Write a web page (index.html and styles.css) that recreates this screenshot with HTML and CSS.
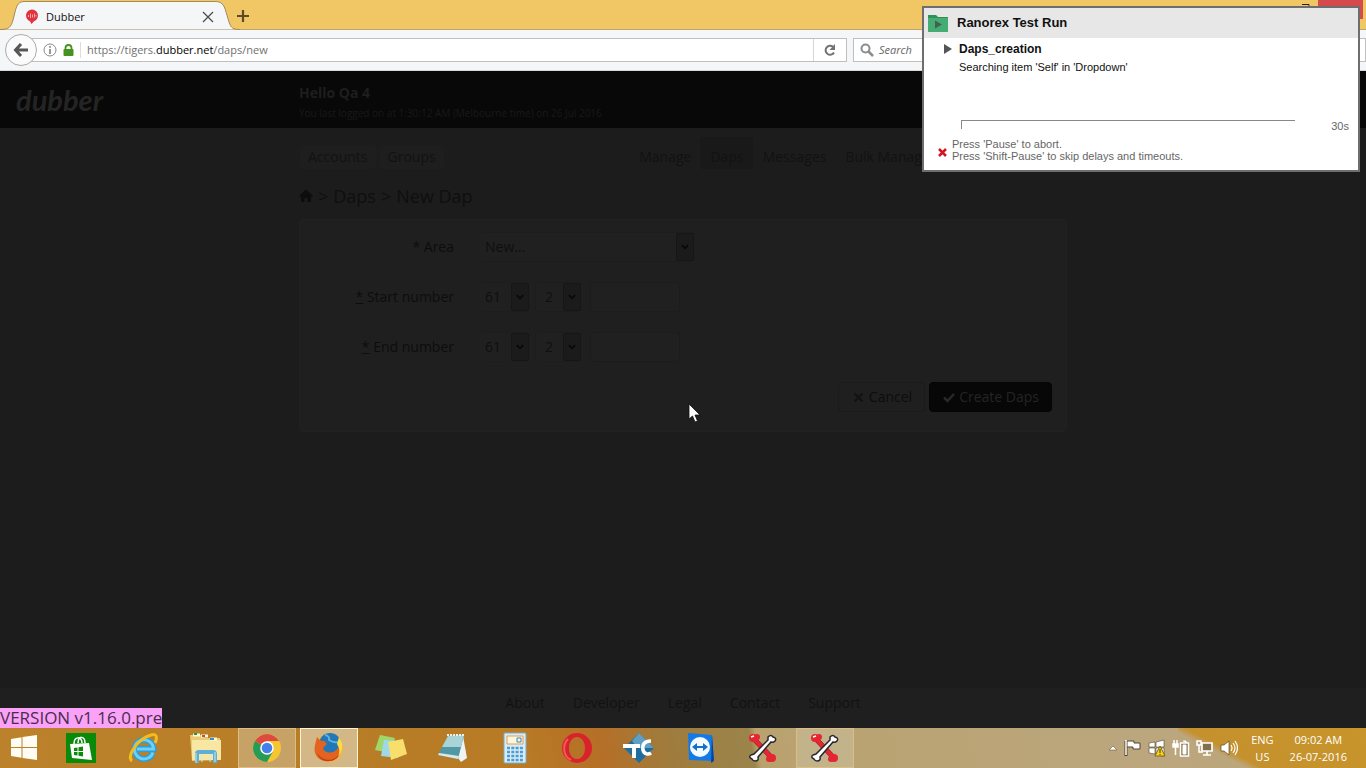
FILE: index.html
```html
<!DOCTYPE html>
<html lang="en">
<head>
<meta charset="utf-8">
<title>Dubber</title>
<link rel="stylesheet" href="styles.css">
</head>
<body>
<div class="tabstrip">
  <svg class="tab-shape" viewBox="0 0 240 30" width="240" height="30" aria-hidden="true"><path d="M0 29.500C9 29.500 11 27 13 20L15 12C17 4 19 1.500 25 1.500H215C221 1.500 224 4 226 12L229 22C231 28 233 29.500 240 29.500V30H0Z" fill="#f5f6f7" stroke="#a28b5c"/></svg>
  <div class="tab">
    <svg width="14" height="16" viewBox="0 0 14 16" aria-hidden="true"><path d="M7 0.500a6 6 0 0 1 6 6c0 3-2 5-4 5.700L6.500 15 5 12.200C3 11.500 1 9.500 1 6.500a6 6 0 0 1 6-6Z" fill="#e0333f"/><path d="M3.500 6v2M5.500 4.500v4.500M7.500 5.500v3M9.500 4.500v4M11 6v1.500" stroke="#f6a5a5"/></svg>
    <span class="tab-title">Dubber</span>
    <button class="plain" aria-label="Close tab"><svg width="12" height="12" viewBox="0 0 12 12"><path d="M1 1l10 10M11 1L1 11" stroke="#4c4c4c" stroke-width="1.300"/></svg></button>
  </div>
  <button class="plain new-tab" aria-label="New tab"><svg width="14" height="14" viewBox="0 0 14 14"><path d="M7 1v12M1 7h12" stroke="#5b4a28" stroke-width="2.200"/></svg></button>
  <div class="window-buttons">
    <button class="plain restore" aria-label="Restore"><svg width="10" height="8" viewBox="0 0 10 8"><path d="M1 1.500h7v6" stroke="#222" fill="none"/></svg></button>
    <button class="plain close" aria-label="Close"></button>
  </div>
</div>

<div class="toolbar">
  <button class="back" aria-label="Back"><svg width="16" height="16" viewBox="0 0 16 16"><path d="M8 2L2.500 8 8 14M3 8h12" fill="none" stroke="#565656" stroke-width="3"/></svg></button>
  <div class="urlbar">
    <svg width="14" height="14" viewBox="0 0 14 14" aria-hidden="true"><circle cx="7" cy="7" r="6" fill="none" stroke="#8a8a8a"/><path d="M7 6v5M7 3v1.700" stroke="#777" stroke-width="1.500"/></svg>
    <svg width="11" height="12" viewBox="0 0 11 12" aria-hidden="true"><path d="M2.500 6V4a3 3 0 0 1 6 0v2" fill="none" stroke="#45931e" stroke-width="1.800"/><rect x="0.500" y="5" width="10" height="7" rx="1" fill="#45931e"/></svg>
    <div class="url">https://tigers.<b>dubber.net</b>/daps/new</div>
    <button class="plain reload" aria-label="Reload"><svg width="14" height="14" viewBox="0 0 14 14"><path d="M11 9.500A4.500 4.500 0 1 1 10 3.800" fill="none" stroke="#727272" stroke-width="2"/><path d="M12 1v6H6.500Z" fill="#727272"/></svg></button>
  </div>
  <div class="searchbar">
    <svg width="14" height="14" viewBox="0 0 14 14" aria-hidden="true"><circle cx="5.500" cy="5.500" r="4" fill="none" stroke="#8c8c8c" stroke-width="2"/><path d="M8.500 8.500l4.500 4.500" stroke="#8c8c8c" stroke-width="2.500"/></svg>
    <input type="text" placeholder="Search" aria-label="Search">
  </div>
</div>

<div class="site">
  <header class="site-header">
    <a class="logo" href="#">dubber</a>
    <div class="container greeting">
      <strong class="hello">Hello Qa 4</strong>
      <p class="last-login">You last logged on at 1:30:12 AM (Melbourne time) on 26 Jul 2016</p>
    </div>
  </header>
  <main class="container">
    <div class="nav-row">
      <nav class="nav-left"><a href="#">Accounts</a><a href="#">Groups</a></nav>
      <nav class="nav-right"><a href="#">Manage</a><a class="active" href="#">Daps</a><a href="#">Messages</a><a href="#">Bulk Manage</a></nav>
    </div>
    <h1 class="crumbs"><a href="#" aria-label="Home"><svg width="14" height="14" viewBox="0 0 14 14"><path d="M0 7L7 0.500 14 7l-1 1-1-1v6H8.500V9h-3v4H2V7L1 8Z" fill="#0d0d0d"/></svg></a><span>&gt;</span><a href="#">Daps</a><span>&gt;</span><span>New Dap</span></h1>
    <form class="panel">
      <div class="field">
        <label for="area">* Area</label>
        <div class="select wide"><select id="area"><option>New...</option></select><svg width="18" height="28" viewBox="0 0 18 28" aria-hidden="true"><path d="M5.500 12L9 15.500 12.500 12"/></svg></div>
      </div>
      <div class="field">
        <label for="start"><u>*</u> Start number</label>
        <div class="select country"><select aria-label="Start country"><option>61</option></select><svg width="18" height="28" viewBox="0 0 18 28" aria-hidden="true"><path d="M5.500 12L9 15.500 12.500 12"/></svg></div>
        <div class="select prefix"><select aria-label="Start area code"><option>2</option></select><svg width="18" height="28" viewBox="0 0 18 28" aria-hidden="true"><path d="M5.500 12L9 15.500 12.500 12"/></svg></div>
        <input class="number" id="start" type="text">
      </div>
      <div class="field">
        <label for="end"><u>*</u> End number</label>
        <div class="select country"><select aria-label="End country"><option>61</option></select><svg width="18" height="28" viewBox="0 0 18 28" aria-hidden="true"><path d="M5.500 12L9 15.500 12.500 12"/></svg></div>
        <div class="select prefix"><select aria-label="End area code"><option>2</option></select><svg width="18" height="28" viewBox="0 0 18 28" aria-hidden="true"><path d="M5.500 12L9 15.500 12.500 12"/></svg></div>
        <input class="number" id="end" type="text">
      </div>
      <div class="actions">
        <button type="button" class="btn"><svg width="11" height="11" viewBox="0 0 11 11" aria-hidden="true"><path d="M1.500 1.500l8 8M9.500 1.500l-8 8" stroke="#131313" stroke-width="2.200"/></svg>Cancel</button>
        <button type="button" class="btn primary"><svg width="12" height="11" viewBox="0 0 12 11" aria-hidden="true"><path d="M1 5.500l3.500 3.500L11 2" fill="none" stroke="#292929" stroke-width="2.500"/></svg>Create Daps</button>
      </div>
    </form>
  </main>
  <footer class="site-footer"><a href="#">About</a><a href="#">Developer</a><a href="#">Legal</a><a href="#">Contact</a><a href="#">Support</a></footer>
  <div class="version">VERSION v1.16.0.pre</div>
</div>

<div class="taskbar">
  <button class="start" aria-label="Start"><svg width="28" height="28" viewBox="0 0 28 28"><path d="M1 5l10.500-1.700V13H1ZM12.500 3.100L27 1v12H12.500ZM1 14h10.500v9.700L1 22ZM12.500 14H27v12l-14.500-2.100Z" fill="#fffdf3"/></svg></button>
  <button class="task" aria-label="Store"><svg width="30" height="30" viewBox="0 0 30 30"><path d="M0 0h30v30H0Z" fill="#098a09"/><path d="M4 11l19-1 3 17L6 25Z" fill="#fff"/><path d="M8 11c0-8 8-8 8-1M12 10c0-8 7-7 7 0" fill="none" stroke="#fff" stroke-width="1.500"/><path d="M8 15l3.500-.5V18H8ZM12.500 14.300L17 13.500V18h-4.500ZM8 19h3.500v3.500L8 22ZM12.500 19H17v4.500l-4.500-.8Z" fill="#098a09"/></svg></button>
  <button class="task" aria-label="Internet Explorer"><svg width="32" height="32" viewBox="0 0 32 32"><path d="M26 20.500a9.500 9.500 0 1 1 .5-3.500H10" fill="none" stroke="#2b9fd9" stroke-width="6"/><path d="M26 20.500a9.500 9.500 0 1 1 .5-3.500H10" fill="none" stroke="#6fd0f5" stroke-width="3"/><path d="M5 29C-1 25 10 7 24 3c7-2 6 4 4 8" fill="none" stroke="#f4bd1c" stroke-width="3"/></svg></button>
  <button class="task" aria-label="File Explorer"><svg width="34" height="32" viewBox="0 0 34 32"><path d="M2 3h12l2 3h16v22l-28 1Z" fill="#e8cc73"/><path d="M4 8h29v20H4Z" fill="#f7e7a2"/><path d="M5 3h7M13 4h7M22 7h7" stroke="#fff8d8" stroke-width="3"/><path d="M6 2h3" stroke="#209a46" stroke-width="2"/><path d="M14 4h3" stroke="#cd4937" stroke-width="2"/><path d="M22 7h4" stroke="#3a8ccf" stroke-width="2"/><path d="M9 31V22q0-2 2-2h14q2 0 2 2v9" fill="none" stroke="#5eafd5" stroke-width="4"/><path d="M8 31V21M14 23v7M22 23v7M27 20v10" stroke="#c4eaf6"/></svg></button>
  <button class="task open" aria-label="Chrome"><svg width="30" height="30" viewBox="0 0 30 30"><circle cx="15" cy="15" r="14" fill="#f5c532"/><path d="M15 15L2.900 8A14 14 0 0 0 15 29l6-10.500Z" fill="#269c56"/><path d="M15 15L2.900 8A14 14 0 0 1 27.100 8H15Z" fill="#dd4b3e"/><circle cx="15" cy="15" r="6.800" fill="#fff"/><circle cx="15" cy="15" r="5.300" fill="#447fea"/></svg></button>
  <button class="task open current" aria-label="Firefox"><svg width="32" height="32" viewBox="0 0 32 32"><circle cx="16" cy="16" r="14" fill="#f2b92e"/><circle cx="17" cy="12" r="11" fill="#2377b6"/><path d="M12 3q5 1 4 5 4 3 9 2" fill="none" stroke="#58b3df" stroke-width="2"/><path d="M4 5c2 2 3 4 7 4 2 1 4 3 1 5-3 1-2 5 2 6 6 2 11-2 12-7 5 10-4 17-12 16C4 29 0 21 2 13Z" fill="#e36320"/><path d="M4 21c5 8 17 10 23 0-3 10-19 12-23 0Z" fill="#c63b1e"/><path d="M26 5q7 10-1 20 3-7-1-13Z" fill="#f9db4b"/></svg></button>
  <button class="task" aria-label="Sticky Notes"><svg width="34" height="28" viewBox="0 0 34 28"><path d="M6 1l15 3-5 15L1 16Z" fill="#9fd76b"/><path d="M10 6l15 1-1 17-17-2Z" fill="#9fd9e9"/><path d="M14 8l15-3 4 15-16 6Z" fill="#f8df6c"/></svg></button>
  <button class="task" aria-label="Notepad"><svg width="32" height="30" viewBox="0 0 32 30"><path d="M26 3l4 22-6 4-3-4Z" fill="#eef4f4"/><path d="M11 3l16-1-6 24L1 22Z" fill="#4f98a4"/><path d="M11 3l16-1-3 12-19 0Z" fill="#a9d3d6"/><path d="M1 22l20 4 1-3-20-3Z" fill="#dce8e8"/><path d="M10 2h17" stroke="#e8f2f2" stroke-width="2" stroke-dasharray="2 1"/></svg></button>
  <button class="task" aria-label="Calculator"><svg width="24" height="32" viewBox="0 0 24 32"><rect x="1" y="1" width="22" height="30" rx="1" fill="#d8ecf7" stroke="#78acd1"/><path d="M4 4h16v8H4Z" fill="#faf6df" stroke="#ea9b49"/><path d="M14 6h4v4h-4Z" fill="none" stroke="#3588bf"/><path d="M4 16h16M4 20h16M4 24h16M4 28h16" stroke="#4e9bd0" stroke-width="2.500" stroke-dasharray="3 1.300"/></svg></button>
  <button class="task" aria-label="Opera"><svg width="32" height="32" viewBox="0 0 32 32"><path fill-rule="evenodd" d="M16 1a15 15 0 1 0 0 30 15 15 0 0 0 0-30Zm0 4c5 0 8 5 8 11s-3 11-8 11-8-5-8-11 3-11 8-11Z" fill="#d9232c"/><path d="M7 7C1 13 2 24 10 28" fill="none" stroke="#f25a5a" stroke-width="2"/></svg></button>
  <button class="task" aria-label="TestComplete"><svg width="32" height="30" viewBox="0 0 32 30"><path d="M16 0l15 15-15 15L1 15Z" fill="#1e6f9f"/><path d="M16 0l15 15H15L9 8Z" fill="#5f9fc3"/><path d="M0 13h17M11 13v12" fill="none" stroke="#fff" stroke-width="4"/><path d="M28 8c-7 0-9 4-8 9 1 4 5 5 8 3" fill="none" stroke="#fff" stroke-width="3.500"/></svg></button>
  <button class="task" aria-label="TeamViewer"><svg width="28" height="32" viewBox="0 0 28 32"><path d="M1 1l24 2 2 26-25-1Z" fill="#1279e7"/><path d="M25 3l2 26-3 2Z" fill="#07439c"/><circle cx="13" cy="15" r="10" fill="#f3faff"/><path d="M5 15l5-4v3h6v-3l5 4-5 4v-3h-6v3Z" fill="#1470c7"/></svg></button>
  <button class="task" aria-label="Ranorex Studio"><svg width="32" height="30" viewBox="0 0 32 30"><path d="M7 6l17 18" stroke="#821117" stroke-width="5"/><circle cx="6" cy="5" r="4" fill="#e42732"/><circle cx="10" cy="4" r="3" fill="#e42732"/><circle cx="25" cy="25" r="4" fill="#e42732"/><circle cx="22" cy="26" r="3" fill="#e42732"/><path d="M7 6l17 18" stroke="#e42732" stroke-width="4.500"/><path d="M4 22l3-1L21 7l0-3q3-3 5 0 4 1 2 4-2 2-4 1L11 24q1 4-3 4-2 0-3-2-4-2-1-4Z" fill="#fff" stroke="#29272b" stroke-width="1.500"/><path d="M4 4l3-1" stroke="#fff" stroke-width="1.500"/></svg></button>
  <button class="task open light" aria-label="Ranorex Recorder"><svg width="32" height="30" viewBox="0 0 32 30"><path d="M7 6l17 18" stroke="#821117" stroke-width="5"/><circle cx="6" cy="5" r="4" fill="#e42732"/><circle cx="10" cy="4" r="3" fill="#e42732"/><circle cx="25" cy="25" r="4" fill="#e42732"/><circle cx="22" cy="26" r="3" fill="#e42732"/><path d="M7 6l17 18" stroke="#e42732" stroke-width="4.500"/><path d="M4 22l3-1L21 7l0-3q3-3 5 0 4 1 2 4-2 2-4 1L11 24q1 4-3 4-2 0-3-2-4-2-1-4Z" fill="#fff" stroke="#29272b" stroke-width="1.500"/><path d="M4 4l3-1" stroke="#fff" stroke-width="1.500"/></svg></button>
  <div class="tray">
    <svg width="10" height="8" viewBox="0 0 10 8" aria-hidden="true"><path d="M1 6l4-4 4 4Z" fill="#fff" stroke="#6a5b40" stroke-width=".6"/></svg>
    <svg width="18" height="18" viewBox="0 0 18 18" aria-hidden="true"><path d="M2 2v15" stroke="#51462f" stroke-width="3"/><path d="M3 2h7v2h6v6h-7V8H3Z" fill="#fff" stroke="#51462f"/><path d="M2 1v15" stroke="#fff" stroke-width="1.500"/></svg>
    <svg width="18" height="18" viewBox="0 0 18 18" aria-hidden="true"><path d="M1 4l6-1v5H1ZM8 3l8-2v7H8ZM1 9h6v6l-6-1ZM8 9h8v8l-8-1Z" fill="#fff" stroke="#51462f" stroke-width=".6"/><path d="M12 7l5 10H7Z" fill="#ffd21c" stroke="#806612"/><path d="M12 10v4M12 15v1" stroke="#333"/></svg>
    <svg width="18" height="18" viewBox="0 0 18 18" aria-hidden="true"><path d="M8.500 4h8v13h-8Z" fill="#8d7a58" stroke="#fff" stroke-width="1.500"/><path d="M11 2h3v2M11 6h3v9h-3Z" fill="#fff" stroke="#fff"/><path d="M2 1v4M5 1v4M1 5h5v3H1ZM3.500 8v8" fill="#fff" stroke="#fff" stroke-width="1.500"/></svg>
    <svg width="18" height="18" viewBox="0 0 18 18" aria-hidden="true"><path d="M6 4h10v8H6ZM11 12v4M7 16h8" fill="#80704f" stroke="#fff" stroke-width="1.700"/><path d="M1 2h4v4H1ZM3 6v7h4" fill="none" stroke="#fff" stroke-width="1.500"/></svg>
    <svg width="18" height="18" viewBox="0 0 18 18" aria-hidden="true"><path d="M1 6h3l5-4v14l-5-4H1Z" fill="#fff" stroke="#51462f" stroke-width=".7"/><path d="M11 6q2 3 0 6M13 4q4 5 0 10M15 2q5 7 0 14" fill="none" stroke="#fff" stroke-width="1.200"/></svg>
    <div class="lang"><span>ENG</span><span>US</span></div>
    <div class="clock"><span>09:02 AM</span><span>26-07-2016</span></div>
  </div>
</div>

<aside class="runner">
  <div class="runner-head">
    <svg width="20" height="18" viewBox="0 0 20 18" aria-hidden="true"><path d="M0 1h8l2 2h10v15H0Z" fill="#2d9159"/><path d="M0 4h20v14H0Z" fill="#45ac74"/><path d="M7 6.500l7 4-7 4Z" fill="#44604f"/></svg>
    <strong>Ranorex Test Run</strong>
  </div>
  <div class="runner-task">
    <svg width="10" height="12" viewBox="0 0 10 12" aria-hidden="true"><path d="M1 1l8 5-8 5Z" fill="#555"/></svg>
    <div><strong>Daps_creation</strong><p>Searching item 'Self' in 'Dropdown'</p></div>
  </div>
  <div class="runner-progress"><div class="track"></div><span>30s</span></div>
  <div class="runner-help">
    <svg width="9" height="9" viewBox="0 0 9 9" aria-hidden="true"><path d="M1 1l7 7M8 1L1 8" stroke="#d31324" stroke-width="2.500"/></svg>
    <p>Press 'Pause' to abort.<br>Press 'Shift-Pause' to skip delays and timeouts.</p>
  </div>
</aside>
<svg class="cursor" width="13" height="21" viewBox="0 0 13 21" aria-hidden="true"><path d="M1 1v15l3.500-3 2.500 6 2.500-1-2.500-6h5Z" fill="#fff" stroke="#111" stroke-width=".8"/></svg>
</body>
</html>
```

FILE: styles.css
```css
* { box-sizing: border-box; }
body { margin: 0; height: 100vh; display: flex; flex-direction: column; position: relative; overflow: hidden; background: #1c1c1c; font: 14px/20px "Open Sans", sans-serif; }
p, h1 { margin: 0; }
a { color: inherit; text-decoration: none; }
button, input, select { font: inherit; color: inherit; }
svg { display: block; flex: none; }
.plain { border: 0; padding: 0; background: none; }

.tabstrip { flex: none; height: 30px; display: grid; grid-template-columns: 236px 1fr auto; background: #f1c765; border-bottom: 1px solid #bfa671; }
.tab-shape { grid-area: 1 / 1; }
.tab { grid-area: 1 / 1; z-index: 1; display: flex; align-items: center; gap: 7px; padding: 3px 22px 0 25px; font-size: 11px; color: #111; }
.tab-title { flex: 1; }
.new-tab { justify-self: start; padding-top: 2px; }
.window-buttons { display: flex; align-items: flex-start; gap: 7px; padding-right: 3px; }
.restore { padding-top: 3px; }
.close { width: 45px; height: 19px; background: #d54a4d; }

.toolbar { flex: none; height: 41px; display: flex; align-items: center; background: #f5f6f7; padding-left: 5px; border-bottom: 1px solid #d8d8d8; color: #707070; font-size: 12px; }
.back { z-index: 1; width: 32px; height: 32px; display: grid; place-items: center; padding: 0; border: 1px solid #aaa; border-radius: 50%; background: #fbfbfb; }
.urlbar { flex: 0 1 816px; height: 24px; margin-left: -6px; padding-left: 11px; display: flex; align-items: center; gap: 6px; background: #fff; border: 1px solid #bfbfbf; }
.url { flex: 1; padding-left: 6px; font-size: 11px; line-height: 16px; border-left: 1px solid #ddd; }
.url b { font-weight: 400; color: #000; }
.reload { width: 33px; height: 22px; display: grid; place-items: center; border-left: 1px solid #d5d5d5; }
.searchbar { flex: 1; height: 24px; margin-left: 6px; padding-left: 6px; display: flex; align-items: center; gap: 5px; background: #fff; border: 1px solid #bfbfbf; }
.searchbar input { flex: 1; min-width: 0; border: 0; padding: 0; background: none; font-size: 11px; }
.searchbar input::placeholder { color: #666; font-style: italic; opacity: 1; }

.site { flex: 1; min-height: 0; display: flex; flex-direction: column; position: relative; background: #1c1c1c; color: #0d0d0d; }
.container { width: 768px; max-width: 100%; margin: 0 auto; }
.site-header { height: 57px; display: grid; align-items: center; background: #080808; color: #1e1e1e; }
.site-header > * { grid-area: 1 / 1; }
.greeting { padding-top: 6px; }
.logo { padding-left: 16px; justify-self: start; z-index: 1; font: italic 700 29px/36px Lato, sans-serif; color: #242424; }
.hello { display: block; line-height: 20px; }
.last-login { font-size: 10px; line-height: 20px; color: #191919; }
.nav-row { display: flex; justify-content: space-between; align-items: flex-end; padding-top: 9px; }
.nav-left, .nav-right { display: flex; line-height: 22px; color: #121212; }
.nav-left { gap: 4px; padding-left: 1px; }
.nav-left a { padding: 1px 8px; background: #1e1e1e; border-radius: 3px; }
.nav-right { flex: 0 0 57%; white-space: nowrap; }
.nav-right a { padding: 9px 9px 1px 10px; }
.nav-right .active { background: #191919; border-radius: 3px; }
.crumbs { display: flex; align-items: center; gap: 5px; margin-top: 14px; font-size: 18px; font-weight: 400; line-height: 26px; color: #0f0f0f; }

.panel { margin-top: 10px; padding: 12px 14px 19px 0; background: #1f1f1f; border: 1px solid #212121; border-radius: 4px; }
.field { display: flex; align-items: center; height: 30px; margin-bottom: 20px; }
.field label { width: 154px; margin-right: 24px; text-align: right; }
.select { display: grid; grid-template-columns: 1fr 18px; height: 30px; color: #0f0f0f; }
.select select { grid-area: 1 / 1 / 2 / 3; appearance: none; min-width: 0; padding: 0 6px; background: #202020; border: 1px solid #1d1d1d; border-radius: 3px; }
.select svg { grid-area: 1 / 2; align-self: center; background: #1b1b1b; border: 1px solid #161616; border-radius: 2px; fill: none; stroke: #080808; stroke-width: 2; pointer-events: none; }
.wide { width: 216px; }
.country { width: 51px; }
.prefix { width: 46px; margin: 0 9px 0 6px; }
.prefix select { padding-left: 9px; }
.number { width: 90px; height: 30px; background: #202020; border: 1px solid #1c1c1c; border-radius: 3px; }
.actions { display: flex; justify-content: flex-end; gap: 4px; }
.btn { height: 30px; display: flex; align-items: center; gap: 5px; padding: 0 12px 0 14px; border: 1px solid #1b1b1b; border-radius: 4px; background: #1f1f1f; }
.btn.primary { background: #070707; border-color: #050505; color: #242424; gap: 4px; padding: 0 12px 0 13px; }
.site-footer { display: flex; justify-content: center; gap: 28px; margin-top: auto; padding: 5px 0 15px; background: #1f1f1f; color: #121212; }
.version { position: absolute; left: 0; bottom: 0; font-size: 17px; line-height: 20px; background: #f9a2f8; color: #4b2d4b; }

.taskbar { flex: none; height: 40px; display: flex; gap: 4px; background: linear-gradient(27deg, transparent 26%, #c4912d 32%, #c8952b) right / 188px 100% no-repeat, linear-gradient(80deg, #bb812b 0%, #b77b25 38%, #b66f27 44%, #9f7c3d 49%, #9b844b 55%, #b9a26e 55.500%, #bba67e 84%, #bda577 100%); }
.start, .task { display: grid; place-items: center; padding: 0; border: 0; background: none; }
.start { width: 48px; }
.task { width: 58px; }
.task.open { border: 1px solid #ddbd83; background: #c6a267; }
.task.current { border-color: #fff3d0; background: #d3b787; }
.task.light { background: #c3b38b; }
.tray { margin-left: auto; display: flex; align-items: center; gap: 6px; padding-right: 19px; font: 11px/17px "Open Sans", sans-serif; color: #fff; text-align: center; }
.lang, .clock { display: flex; flex-direction: column; }
.lang { margin: 0 10px 0 7px; }

.runner { position: absolute; right: 6px; top: 6px; width: 438px; height: 166px; display: flex; flex-direction: column; background: #fff; border: 2px solid #6e6e6e; font: 12px/12px "Liberation Sans", sans-serif; color: #666; }
.runner-head { height: 30px; display: flex; align-items: center; gap: 9px; padding-left: 4px; background: #e7e7e7; font-size: 13px; color: #111; }
.runner-task { display: flex; gap: 6px; padding: 5px 0 0 19px; color: #111; }
.runner-task p { margin-top: 6px; font-size: 11px; }
.runner-progress { display: flex; justify-content: space-between; margin-top: auto; padding: 0 9px 0 37px; }
.track { width: 334px; height: 9px; border: solid #888; border-width: 1px 0 0 1px; }
.runner-progress span { font-size: 11px; line-height: 13px; }
.runner-help { display: flex; align-items: flex-end; gap: 5px; padding: 5px 0 8px 14px; font-size: 11px; }
.runner-help svg { margin-bottom: 5px; }
.cursor { position: absolute; left: 688px; top: 403px; }
```
